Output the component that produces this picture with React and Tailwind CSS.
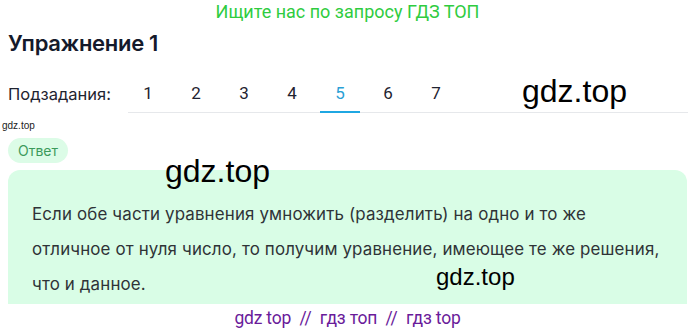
export default function App() {
  const tabs = [1, 2, 3, 4, 5, 6, 7];
  const active = 5;

  return (
    <div className="relative w-[695px] h-[333px] overflow-hidden bg-white font-['Roboto',sans-serif]">
      <p className="text-center text-[18px] leading-[24px] text-[#2fcc3f]">
        Ищите нас по запросу ГДЗ ТОП
      </p>

      <h1 className="mt-[6px] pl-2 font-['Inter',sans-serif] text-[22px] font-semibold leading-[26px] text-[#141a2b] tracking-[-0.3px]">
        Упражнение 1
      </h1>

      <div className="mt-[27px] flex items-end pl-2 pr-[7px]">
        <span className="w-[120px] pb-[9px] font-['Inter',sans-serif] text-[16.5px] leading-[20px] text-[#1f2330]">Подзадания:</span>
        <div className="flex flex-1 gap-2 border-b border-[#e6e8eb]">
          {tabs.map((t) => (
            <div
              key={t}
              className={
                t === active
                  ? "-mb-px w-10 border-b-2 border-[#1fa7e2] pb-[8px] text-center text-[17px] leading-[20px] text-[#2a9fd6]"
                  : "w-10 pb-[9px] text-center text-[17px] leading-[20px] text-[#1f2330]"
              }
            >
              {t}
            </div>
          ))}
        </div>
      </div>

      <div className="mt-[7px] pl-[2px] font-['Liberation_Sans',sans-serif] text-[10px] leading-[12px] text-[#222]">gdz.top</div>

      <div className="ml-2 mt-[6px] inline-flex h-[25px] w-[60px] items-center justify-center rounded-full bg-[#dcfce7] font-['Inter',sans-serif] text-[14px] text-[#3c9a5b]">
        Ответ
      </div>

      <div className="mx-2 mt-[7px] h-[134px] rounded-t-[12px] bg-[#d9fde6] px-6 pt-[27px] font-['Inter',sans-serif] text-[16.9px] leading-[35px] tracking-[0.15px] text-[#2f3337]">
        Если обе части уравнения умножить (разделить) на одно и то же отличное от нуля число, то получим уравнение, имеющее те же решения, что и данное.
      </div>

      <p className="mt-[3px] text-center text-[17.5px] leading-[22px] tracking-[-0.2px] text-[#6a1b9a]">
        gdz top &nbsp;//&nbsp; гдз топ &nbsp;//&nbsp; гдз top
      </p>

      <span className="absolute left-[522px] top-[73px] font-['Liberation_Sans',sans-serif] text-[32px] leading-[36px] text-black">gdz.top</span>
      <span className="absolute left-[165px] top-[153px] font-['Liberation_Sans',sans-serif] text-[32px] leading-[36px] text-black">gdz.top</span>
      <span className="absolute left-[436px] top-[263px] font-['Liberation_Sans',sans-serif] text-[24px] leading-[28px] text-black">gdz.top</span>
    </div>
  );
}
